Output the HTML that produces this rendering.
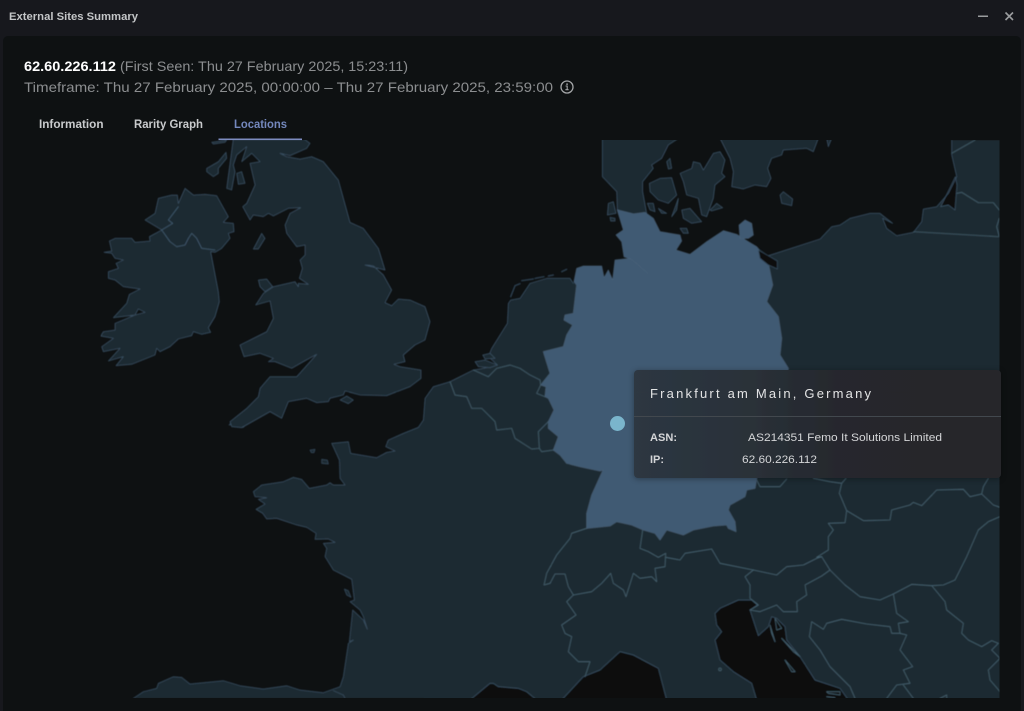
<!DOCTYPE html>
<html><head><meta charset="utf-8"><title>External Sites Summary</title>
<style>
html,body{margin:0;padding:0;background:#17181d;width:1024px;height:711px;overflow:hidden}
svg{position:absolute;left:0;top:0;display:block}
text{font-family:"Liberation Sans",sans-serif}
</style></head><body>
<svg width="1024" height="711" viewBox="0 0 1024 711" xmlns="http://www.w3.org/2000/svg">
<defs>
<clipPath id="mc"><rect x="0" y="140" width="999.5" height="558"/></clipPath>
<linearGradient id="tg" x1="0" y1="0" x2="1" y2="0"><stop offset="0" stop-color="#2d3742"/><stop offset=".3" stop-color="#2a3139"/><stop offset=".55" stop-color="#25282d"/><stop offset="1" stop-color="#25272b"/></linearGradient>
<filter id="sh" x="-5%" y="-10%" width="110%" height="120%"><feDropShadow dx="0" dy="1" stdDeviation="3" flood-color="#000" flood-opacity=".35"/></filter>
<filter id="soft" x="0" y="0" width="100%" height="100%"><feGaussianBlur stdDeviation=".4"/></filter>
</defs>
<rect width="1024" height="711" fill="#17181d"/>
<rect x="3" y="36" width="1018" height="680" rx="5" fill="#0e1112"/>

<text x="9" y="20" font-size="11" font-weight="bold" fill="#c4c6c8" textLength="129" lengthAdjust="spacingAndGlyphs">External Sites Summary</text>
<rect x="978" y="15.5" width="10" height="1.5" fill="#9a9c9e"/>
<path d="M1005.5 12.5L1013 20M1013 12.5L1005.5 20" stroke="#9a9c9e" stroke-width="1.6" fill="none"/>

<text x="24" y="71" font-size="14" font-weight="bold" fill="#ffffff" textLength="92" lengthAdjust="spacingAndGlyphs">62.60.226.112</text>
<text x="120" y="71" font-size="14" fill="#8c8e90" textLength="288" lengthAdjust="spacingAndGlyphs">(First Seen: Thu 27 February 2025, 15:23:11)</text>
<text x="24" y="92" font-size="14" fill="#8c8e90" textLength="529" lengthAdjust="spacingAndGlyphs">Timeframe: Thu 27 February 2025, 00:00:00 – Thu 27 February 2025, 23:59:00</text>
<circle cx="567" cy="87" r="6" fill="none" stroke="#a4a6a8" stroke-width="1.3"/>
<path d="M565.6 86h1.6v3.6M565.4 89.7h3.2" fill="none" stroke="#a4a6a8" stroke-width="1.1"/><rect x="566.3" y="83.4" width="1.5" height="1.5" fill="#a4a6a8"/>

<text x="39" y="128" font-size="11.5" font-weight="bold" fill="#c9cbcd" textLength="64.5" lengthAdjust="spacingAndGlyphs">Information</text>
<text x="134" y="128" font-size="11.5" font-weight="bold" fill="#c9cbcd" textLength="69" lengthAdjust="spacingAndGlyphs">Rarity Graph</text>
<text x="234" y="128" font-size="11.5" font-weight="bold" fill="#7488bd" textLength="53" lengthAdjust="spacingAndGlyphs">Locations</text>

<g clip-path="url(#mc)">
<g filter="url(#soft)">
<g transform="translate(420 135) scale(.33333)" stroke-linejoin="round" stroke-linecap="round">
<!-- land fills -->
<g fill="#1f2a31">
<path transform="translate(-900 855)" d="M40 835L70 815 110 805 115 790 160 770 185 772 210 792 310 782 360 797 430 807 500 797 540 810 610 818 660 800 670 770 685 670 700 660 688 665 698 570 730 600 742 628 730 590 720 570 690 545 703 540 695 478 640 450 615 410 620 385 610 370 645 367 625 357 585 358 588 340 560 322 530 315 470 295 440 297 428 280 408 268 435 252 415 238 440 233 405 230 400 215 425 195 490 185 520 172 545 178 568 205 620 195 630 188 640 195 675 195 660 175 658 120 635 70 685 65 692 100 770 113 800 97 825 93 797 80 805 60 850 40 895 22 910 0 1320 0 1320 835Z"/>
<path d="M10 855L15 790 40 755 90 740 160 705 190 700 232 690 205 665 215 640 262 565 265 505 272 495 300 490 330 445 380 430 450 430 460 445 470 400 490 393 545 393 552 428 565 405 578 435 585 375 630 370 655 390 683 415 650 385 632 372 612 365 605 320 588 300 610 285 590 225 640 237 675 232 700 250 720 290 780 300 785 318 768 345 810 358 860 320 910 287 950 298 985 320 1010 335 1045 362 1200 312 1235 275 1260 270 1290 250 1350 235 1380 235 1418 265 1388 250 1400 280 1430 302 1480 292 1505 260 1510 222 1550 215 1585 175 1610 125 1595 60 1595 15 1780 15 1780 1700 10 1700Z"/>
</g>
<!-- inland sea cut-outs -->
<g fill="#0d0f10" stroke="#3b5266" stroke-width="2.2">
<path transform="translate(-900 855)" d="M1050 840L1110 790 1120 790 1135 800 1195 805 1220 815 1250 840Z"/>
<path transform="translate(300 1005)" d="M125 690L190 620 240 600 300 545 340 555 415 595 440 690Z"/>
<path transform="translate(300 1005)" d="M585 430L600 415 655 390 695 390 712 405 690 420 715 497 745 470 755 440 770 445 795 470 800 510 840 560 885 630 960 655 985 690 710 690 695 640 640 605 600 570 585 510 605 485 590 465Z"/>
<path transform="translate(840 0)" d="M722 215L745 210 765 225 771 150 766 125Z"/>
</g>
<!-- mainland coast strokes -->
<g fill="none" stroke="#3b5266" stroke-width="2.2">
<path transform="translate(-900 855)" d="M40 835L70 815 110 805 115 790 160 770 185 772 210 792 310 782 360 797 430 807 500 797 540 810 610 818 660 800 670 770 685 670 700 660 688 665 698 570 730 600 742 628 730 590 720 570 690 545 703 540 695 478 640 450 615 410 620 385 610 370 645 367 625 357 585 358 588 340 560 322 530 315 470 295 440 297 428 280 408 268 435 252 415 238 440 233 405 230 400 215 425 195 490 185 520 172 545 178 568 205 620 195 630 188 640 195 675 195 660 175 658 120 635 70 685 65 692 100 770 113 800 97 825 93 797 80 805 60 850 40 895 22 910 0"/>
<path d="M10 855L15 790 40 755 90 740 160 705 190 700 232 690 205 665 215 640 262 565 265 505 272 495 300 490 330 445 380 430 450 430 460 445M1045 362L1200 312 1235 275 1260 270 1290 250 1350 235 1380 235 1418 265 1388 250 1400 280 1430 302 1480 292 1505 260 1510 222 1550 215 1585 175 1610 125 1595 60 1595 15"/>
<path transform="translate(-900 855)" d="M640 812L670 825 675 835"/>
</g>
<!-- Jutland, Sweden and island land -->
<g fill="#1f2a31" stroke="#3b5266" stroke-width="2.2">
<path d="M547 10L547 125 590 170 592 225 640 237 680 235 668 170 668 140 700 100 695 90 725 70 745 30 775 10Z"/>
<path d="M780 115L815 100 820 80 840 85 850 105 880 55 900 50 915 75 905 115 915 125 885 150 880 190 860 245 845 240 835 190 800 180 790 140Z"/>
<path d="M688 145L720 130 755 128 770 180 745 205 715 195 690 170Z"/>
<path d="M682 205L700 205 705 230 690 225ZM715 220L740 235 725 235ZM755 245L775 190 770 225ZM785 225L810 220 845 260 815 265 790 250ZM870 225L890 205 908 218 875 228ZM740 80L750 70 755 100 745 102ZM780 280L800 280 805 295 790 295ZM565 205L580 200 588 235 562 240ZM570 247L585 250 585 258 572 258Z"/>
<path d="M900 10L930 70 940 110 935 155 970 162 1005 150 1040 155 1053 130 1043 100 1055 70 1085 60 1090 45 1160 40 1180 50 1195 10ZM1220 10L1235 10 1225 35ZM1080 180L1090 170 1118 192 1115 212 1085 205Z"/>
<!-- Low countries islands -->
<path d="M165 680L195 675 232 690 210 698 175 695ZM188 660L210 655 225 670 195 672Z" />
</g>
<path d="M272 485L285 452 300 446M305 437L340 432M345 430L372 425M385 423L400 420M425 410L440 403" fill="none" stroke="#2f4354" stroke-width="4"/>
<!-- French islands -->
<g transform="translate(-900 855)" fill="#1f2a31" stroke="#3b5266" stroke-width="2">
<path d="M570 90L585 88 582 98 574 98ZM605 118L622 120 625 132 605 130ZM673 507L685 512 693 532 680 525Z"/>
<path d="M327 15L340 0 388 0 370 22 345 14Z"/>
</g>
<!-- British Isles -->
<g transform="translate(-990 0)" fill="#1f2a31" stroke="#3b5266" stroke-width="2.2">
<path d="M58 318L75 310 125 310 135 322 180 318 178 305 215 285 165 255 195 235 205 190 245 180 262 180 265 205 285 160 310 180 345 178 380 182 415 245 400 262 430 265 432 290 415 295 420 310 395 340 375 352 362 350 385 470 388 500 375 545 355 578 362 592 335 598 310 590 305 602 265 612 240 635 210 650 200 640 195 660 125 688 78 692 100 665 55 678 90 640 40 650 35 635 70 610 32 603 40 590 75 585 75 565 135 540 165 532 145 522 135 540 70 548 110 505 118 478 150 462 100 455 75 435 55 430 55 410 85 400 78 385 100 375 75 370 65 355 42 352 65 348Z"/>
<path d="M430 10L410 160 425 165 435 110 430 90 440 60 470 35 455 80 485 55 510 80 480 85 495 150 470 205 458 215 480 255 490 240 520 245 535 235 550 243 595 220 632 218 600 235 585 270 590 295 620 335 645 330 645 360 630 375 637 400 628 430 655 448 625 445 625 455 615 440 550 455 520 475 497 510 540 498 550 550 530 590 450 630 462 665 510 655 550 670 535 680 555 680 605 700 640 680 680 658 620 725 540 725 510 760 505 785 470 820 420 860 425 875 455 878 540 830 575 850 595 800 650 790 680 803 715 800 720 790 760 780 765 768 810 780 890 782 960 755 993 730 993 705 930 695 912 688 945 680 940 660 975 630 1005 615 1020 560 1005 515 960 495 925 492 905 512 885 503 905 465 880 420 850 393 825 390 885 405 865 340 820 280 780 262 745 135 700 80 665 65 630 72 590 65 570 55 600 62 650 40 660 25 640 10Z"/>
<path d="M365 22L410 15 405 22 370 27ZM350 100L385 80 408 52 410 70 385 100 385 115 370 125 350 110ZM440 115L455 110 465 145 445 148ZM490 342L515 295 525 310 505 342ZM505 435L530 432 548 455 525 470 510 455ZM750 795L770 783 790 795 775 806Z"/>
<path fill="none" stroke="#446078" d="M265 215L235 255 248 265 215 285 240 320 260 335 285 330 295 310 305 295 320 310 335 340 375 345"/>
</g>
<!-- borders -->
<g fill="none" stroke="#44606f" stroke-width="2.5">
<path d="M90 740L105 780 140 785 155 820 185 820 225 860 230 885 275 880 285 910 335 942 358 940 355 890 385 860M358 940L365 950 400 945M160 705L205 725 230 700 270 690 300 700 330 720 360 735 362 750 350 775 375 785"/>
<g transform="translate(300 1005)">
<path d="M200 175L155 190 150 205 110 255 80 310 72 345 90 340 105 312 135 312 145 350 160 375 215 365 245 340 272 310 280 340 310 360 318 380 340 310 360 325 395 320 410 335 405 295 435 290 437 250 415 262 385 245 360 235 368 180"/>
<path d="M437 262L480 270 495 250 575 237 600 280 700 300 770 315 800 290 850 285 890 265 905 260"/>
<path d="M710 30L720 50 780 50 800 27M880 25L930 35 965 40 978 25M965 40L958 70 980 122 1030 152 1110 150 1115 120 1170 105 1180 97 1205 107 1250 60 1330 58 1350 80 1385 72 1420 105 1440 112M1385 72L1390 50 1405 25"/>
<path d="M980 122L975 158 925 160 940 180 925 200 925 240 890 262 905 260 930 300"/>
<path d="M700 300L675 320 690 345 690 385 715 405 690 420 720 425 770 405 790 425 832 425 830 395 860 375 855 345 905 318 930 300"/>
<path d="M930 300L975 345 1020 380 1080 390 1120 372 1175 343 1235 347 1270 345 1305 330 1340 260 1375 180 1405 155 1440 140"/>
<path d="M1120 372L1130 430 1165 455 1135 460 1140 490 1115 490 1110 470 1040 462 965 448 920 460 910 478 875 455 868 500 900 540 930 590 990 650 1005 685"/>
<path d="M1140 490L1160 495 1140 540 1178 590 1150 600 1170 640 1130 645 1100 685M1150 645L1180 685M1260 685L1280 675 1280 685"/>
<path d="M1235 347L1275 395 1280 420 1330 460 1325 490 1345 510 1385 530 1415 512 1435 520 1415 540 1440 565 1405 600 1410 630 1440 665"/>
<path d="M160 375L140 395 168 435 125 465 135 490 155 500 145 545 175 575 210 575 195 620"/>
<path d="M765 445L785 475 770 480ZM750 465L765 515 755 490ZM785 505L840 560 820 545ZM795 570L825 605 815 605ZM920 665L960 665 960 675 925 670ZM920 680L945 683"/>
<circle cx="600" cy="598" r="4"/>
</g>
<g transform="translate(840 0)">
<path d="M755 55L825 15M640 290L895 305M770 175L785 172 835 203 880 203 898 225M898 250L890 275 898 305"/>
</g>
</g>
<!-- Germany -->
<path fill="#415a73" stroke="#4a6279" stroke-width="2" d="M592 225L640 237 675 232 700 250 720 290 780 300 785 318 768 345 810 358 860 320 910 287 950 298 985 320 1010 335 1045 385 1058 450 1040 500 1075 545 1085 610 1080 660 1105 700 1060 900 1010 1030 1005 1060 980 1065 975 1085 930 1110 925 1125 945 1160 948 1190 925 1180 920 1170 880 1173 820 1185 790 1200 740 1185 720 1215 705 1195 670 1185 635 1170 590 1160 570 1173 500 1180 500 1135 515 1080 549 1005 540 1008 480 995 440 985 420 960 400 945 415 905 385 880 385 860 402 825 385 790 375 785 378 755 362 750 390 715 370 650 430 635 440 600 458 570 432 555 435 540 460 535 470 450 462 440 470 400 490 393 545 393 552 428 565 405 578 435 585 375 630 370 655 390 683 415 650 385 632 372 612 365 605 320 588 300 610 285Z"/>
<!-- Rügen and lagoon -->
<path fill="#415a73" stroke="#4a6279" stroke-width="2" d="M957 270L975 255 995 265 1000 300 985 310 960 310Z"/>
<path fill="#0d0f10" stroke="#3b5266" stroke-width="2" d="M1015 345L1045 362 1072 378 1072 402 1045 390 1020 370Z"/>
</g>
</g>
</g>

<circle cx="617.5" cy="423.5" r="7.5" fill="#7ab5cc"/>

<!-- tooltip -->
<rect x="634" y="370" width="367" height="108" rx="4" fill="url(#tg)" filter="url(#sh)"/>
<rect x="634" y="416" width="367" height="1" fill="#42484e"/>
<text x="650" y="398" font-size="13" fill="#e3e4e5" textLength="221" lengthAdjust="spacing">Frankfurt am Main, Germany</text>
<text x="650" y="441" font-size="11" font-weight="bold" fill="#d5d6d8" textLength="27" lengthAdjust="spacingAndGlyphs">ASN:</text>
<text x="748" y="441" font-size="11" fill="#d5d6d8" textLength="194" lengthAdjust="spacingAndGlyphs">AS214351 Femo It Solutions Limited</text>
<text x="650" y="463" font-size="11" font-weight="bold" fill="#d5d6d8" textLength="14" lengthAdjust="spacingAndGlyphs">IP:</text>
<text x="742" y="463" font-size="11" fill="#d5d6d8" textLength="75" lengthAdjust="spacingAndGlyphs">62.60.226.112</text>

<rect x="218.5" y="138.5" width="83.5" height="1.6" fill="#7d8cc0"/>
</svg>
</body></html>
